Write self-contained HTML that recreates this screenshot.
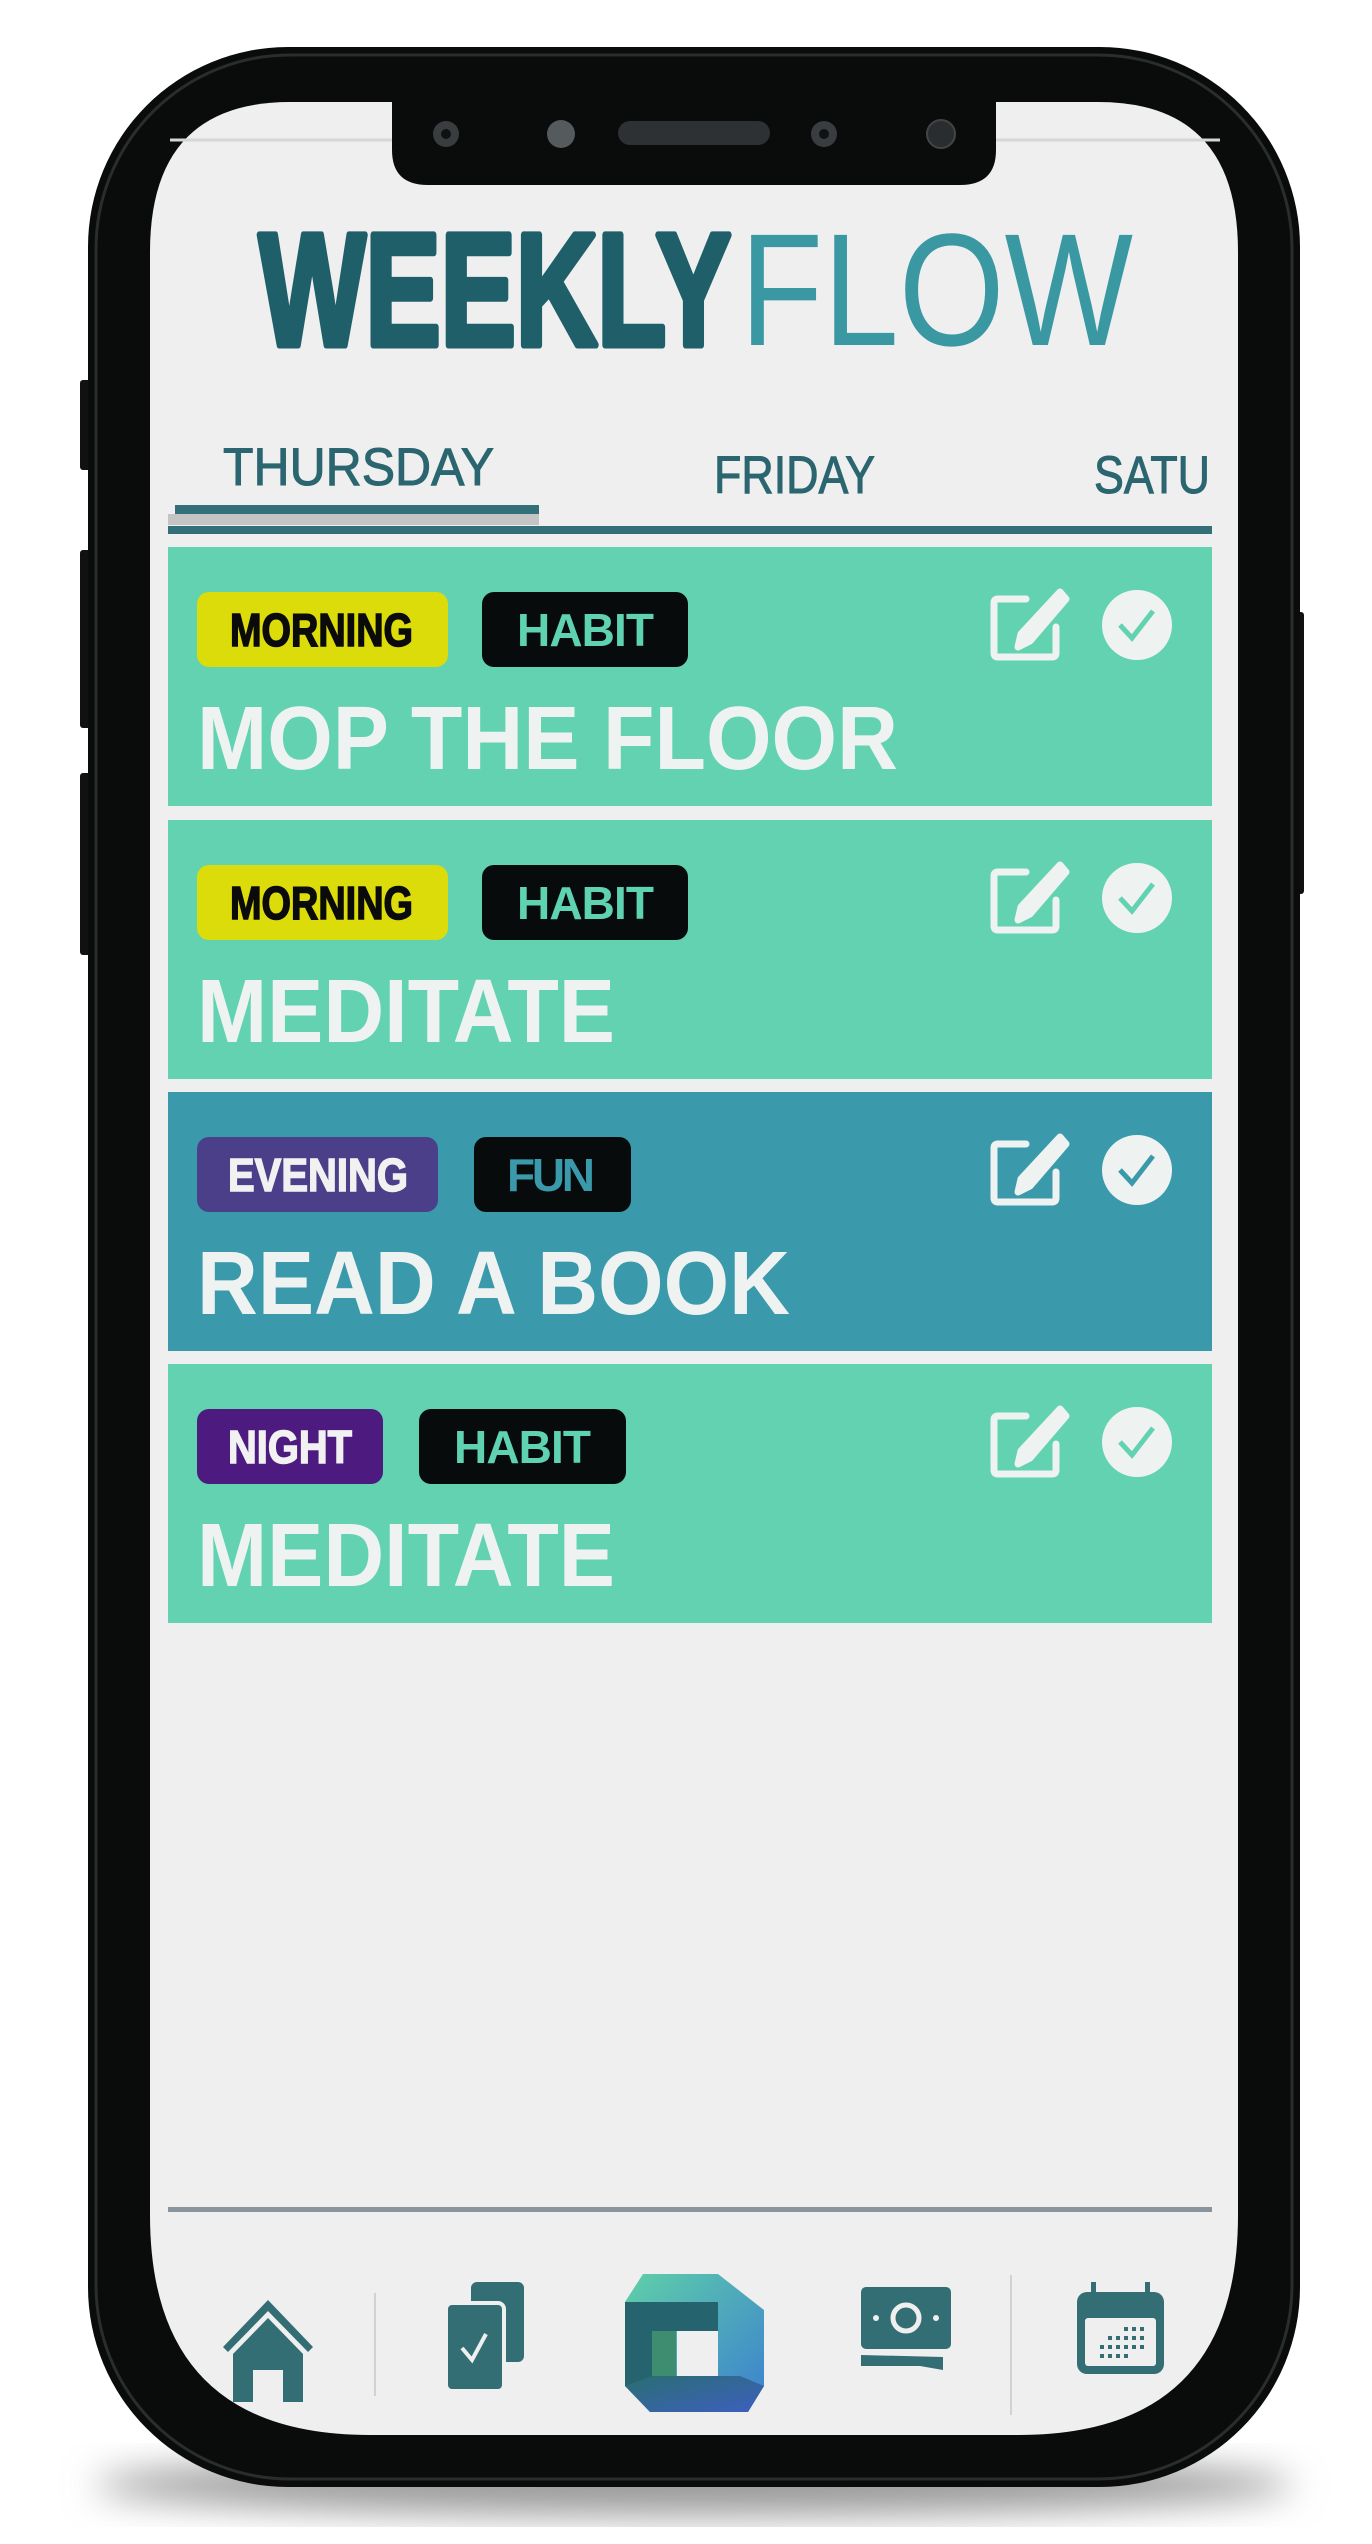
<!DOCTYPE html>
<html><head><meta charset="utf-8"><style>
html,body{margin:0;padding:0;background:#fff;width:1372px;height:2544px;overflow:hidden}
svg{display:block}
</style></head><body>
<svg width="1372" height="2544" viewBox="0 0 1372 2544" xmlns="http://www.w3.org/2000/svg" font-family="Liberation Sans, sans-serif">
<defs>
<filter id="sh" x="-20%" y="-20%" width="140%" height="140%"><feGaussianBlur stdDeviation="18"/></filter>
<linearGradient id="lg1" x1="0" y1="0" x2="1" y2="1"><stop offset="0" stop-color="#5fd0a8"/><stop offset="1" stop-color="#3b7fd0"/></linearGradient>
<linearGradient id="lg2" x1="0" y1="0" x2="1" y2="1"><stop offset="0" stop-color="#2a6e70"/><stop offset="1" stop-color="#3d5fc0"/></linearGradient>
</defs>
<ellipse cx="694" cy="2485" rx="600" ry="30" fill="#999" filter="url(#sh)"/>
<rect x="80" y="380" width="12" height="90" rx="3" fill="#111"/>
<rect x="80" y="550" width="12" height="178" rx="3" fill="#111"/>
<rect x="80" y="773" width="12" height="182" rx="3" fill="#111"/>
<rect x="1290" y="612" width="14" height="282" rx="3" fill="#111"/>
<rect x="88" y="47" width="1212" height="2440" rx="200" fill="#0a0b0b"/>
<rect x="96" y="55" width="1196" height="2424" rx="194" fill="none" stroke="#2a2d2e" stroke-width="3"/>
<path d="M290 102 H1098 Q1238 102 1238 252 V2215 Q1238 2435 1018 2435 H370 Q150 2435 150 2215 V252 Q150 102 290 102 Z" fill="#efefef"/>
<line x1="170" y1="140" x2="1220" y2="140" stroke="#d6d6d6" stroke-width="3"/>
<path d="M392 100 H996 V150 Q996 185 960 185 H428 Q392 185 392 150 Z" fill="#0a0b0b"/>
<circle cx="446" cy="134" r="13" fill="#3a3d3f"/><circle cx="446" cy="134" r="5" fill="#111"/>
<circle cx="561" cy="134" r="14" fill="#555a5c"/>
<rect x="618" y="121" width="152" height="24" rx="12" fill="#2e3133"/>
<circle cx="824" cy="134" r="13" fill="#3a3d3f"/><circle cx="824" cy="134" r="5" fill="#111"/>
<circle cx="941" cy="134" r="14" fill="#2a2d2f" stroke="#444" stroke-width="2"/>
<text x="259" y="345" font-size="160" font-weight="bold" fill="#1f5f6a" stroke="#1f5f6a" stroke-width="7" stroke-linejoin="round" textLength="472" lengthAdjust="spacingAndGlyphs">WEEKLY</text>
<text x="740" y="345" font-size="160" fill="#3a98a3" textLength="393" lengthAdjust="spacingAndGlyphs">FLOW</text>
<text x="223" y="485" font-size="53" fill="#2b6670" stroke="#2b6670" stroke-width="1" textLength="271" lengthAdjust="spacingAndGlyphs">THURSDAY</text>
<text x="714" y="493" font-size="53" fill="#2b6670" stroke="#2b6670" stroke-width="1" textLength="161" lengthAdjust="spacingAndGlyphs">FRIDAY</text>
<text x="1094" y="493" font-size="53" fill="#2b6670" stroke="#2b6670" stroke-width="1" textLength="116" lengthAdjust="spacingAndGlyphs">SATU</text>
<rect x="175" y="505" width="364" height="9" fill="#336f78"/>
<rect x="168" y="514" width="371" height="11" fill="#c4c4c4"/>
<rect x="168" y="526" width="1044" height="8" fill="#336f78"/>

<g transform="translate(0,547)">
<rect x="168" y="0" width="1044" height="259" fill="#62d2b1"/>
<rect x="197" y="45" width="251" height="75" rx="12" fill="#dcdc0a"/>
<text x="230" y="99" font-size="46" font-weight="bold" fill="#0b0b0b" stroke="#0b0b0b" stroke-width="1.5" textLength="183" lengthAdjust="spacingAndGlyphs">MORNING</text>
<rect x="482" y="45" width="206" height="75" rx="12" fill="#070b0b"/>
<text x="517" y="99" font-size="46" font-weight="bold" fill="#5fd2b1" textLength="137" lengthAdjust="spacing">HABIT</text>
<text x="197" y="222" font-size="90" font-weight="bold" fill="#eef3f1" textLength="701" lengthAdjust="spacingAndGlyphs">MOP THE FLOOR</text>
<g fill="none" stroke="#eef3f1" stroke-width="7" stroke-linejoin="round" stroke-linecap="round"><path d="M1026 52 H998 Q994 52 994 56 V106 Q994 110 998 110 H1052 Q1056 110 1056 106 V80"/><path d="M1060 45 L1066 52 L1030 94 L1018 100 L1021 87 Z" fill="#eef3f1"/></g>
<circle cx="1137" cy="78" r="35" fill="#eef3f1"/><path d="M1120 78 L1132 91 L1153 64" fill="none" stroke="#62d2b1" stroke-width="5"/>
</g>

<g transform="translate(0,820)">
<rect x="168" y="0" width="1044" height="259" fill="#62d2b1"/>
<rect x="197" y="45" width="251" height="75" rx="12" fill="#dcdc0a"/>
<text x="230" y="99" font-size="46" font-weight="bold" fill="#0b0b0b" stroke="#0b0b0b" stroke-width="1.5" textLength="183" lengthAdjust="spacingAndGlyphs">MORNING</text>
<rect x="482" y="45" width="206" height="75" rx="12" fill="#070b0b"/>
<text x="517" y="99" font-size="46" font-weight="bold" fill="#5fd2b1" textLength="137" lengthAdjust="spacing">HABIT</text>
<text x="197" y="222" font-size="90" font-weight="bold" fill="#eef3f1" textLength="418" lengthAdjust="spacingAndGlyphs">MEDITATE</text>
<g fill="none" stroke="#eef3f1" stroke-width="7" stroke-linejoin="round" stroke-linecap="round"><path d="M1026 52 H998 Q994 52 994 56 V106 Q994 110 998 110 H1052 Q1056 110 1056 106 V80"/><path d="M1060 45 L1066 52 L1030 94 L1018 100 L1021 87 Z" fill="#eef3f1"/></g>
<circle cx="1137" cy="78" r="35" fill="#eef3f1"/><path d="M1120 78 L1132 91 L1153 64" fill="none" stroke="#62d2b1" stroke-width="5"/>
</g>

<g transform="translate(0,1092)">
<rect x="168" y="0" width="1044" height="259" fill="#3a9aab"/>
<rect x="197" y="45" width="241" height="75" rx="12" fill="#4a3f88"/>
<text x="228" y="99" font-size="46" font-weight="bold" fill="#f1f1f1" stroke="#f1f1f1" stroke-width="1.5" textLength="180" lengthAdjust="spacingAndGlyphs">EVENING</text>
<rect x="474" y="45" width="157" height="75" rx="12" fill="#070b0b"/>
<text x="507" y="99" font-size="46" font-weight="bold" fill="#3a9aab" textLength="88" lengthAdjust="spacing">FUN</text>
<text x="197" y="222" font-size="90" font-weight="bold" fill="#eef3f1" textLength="593" lengthAdjust="spacingAndGlyphs">READ A BOOK</text>
<g fill="none" stroke="#eef3f1" stroke-width="7" stroke-linejoin="round" stroke-linecap="round"><path d="M1026 52 H998 Q994 52 994 56 V106 Q994 110 998 110 H1052 Q1056 110 1056 106 V80"/><path d="M1060 45 L1066 52 L1030 94 L1018 100 L1021 87 Z" fill="#eef3f1"/></g>
<circle cx="1137" cy="78" r="35" fill="#eef3f1"/><path d="M1120 78 L1132 91 L1153 64" fill="none" stroke="#3a9aab" stroke-width="5"/>
</g>

<g transform="translate(0,1364)">
<rect x="168" y="0" width="1044" height="259" fill="#62d2b1"/>
<rect x="197" y="45" width="186" height="75" rx="12" fill="#4d1a80"/>
<text x="228" y="99" font-size="46" font-weight="bold" fill="#f1f1f1" stroke="#f1f1f1" stroke-width="1.5" textLength="124" lengthAdjust="spacingAndGlyphs">NIGHT</text>
<rect x="419" y="45" width="207" height="75" rx="12" fill="#070b0b"/>
<text x="454" y="99" font-size="46" font-weight="bold" fill="#5fd2b1" textLength="137" lengthAdjust="spacing">HABIT</text>
<text x="197" y="222" font-size="90" font-weight="bold" fill="#eef3f1" textLength="418" lengthAdjust="spacingAndGlyphs">MEDITATE</text>
<g fill="none" stroke="#eef3f1" stroke-width="7" stroke-linejoin="round" stroke-linecap="round"><path d="M1026 52 H998 Q994 52 994 56 V106 Q994 110 998 110 H1052 Q1056 110 1056 106 V80"/><path d="M1060 45 L1066 52 L1030 94 L1018 100 L1021 87 Z" fill="#eef3f1"/></g>
<circle cx="1137" cy="78" r="35" fill="#eef3f1"/><path d="M1120 78 L1132 91 L1153 64" fill="none" stroke="#62d2b1" stroke-width="5"/>
</g>

<rect x="168" y="2207" width="1044" height="5" fill="#8a949c"/>
<line x1="375" y1="2293" x2="375" y2="2396" stroke="#cfd3d6" stroke-width="2"/>
<line x1="1011" y1="2275" x2="1011" y2="2415" stroke="#cfd3d6" stroke-width="2"/>
<g fill="#336e74">
<path d="M223 2347 L268 2300 L313 2347 L308 2352 L268 2311 L228 2352 Z"/>
<path d="M233 2354 L268 2318 L303 2354 V2402 H283 V2370 H253 V2402 H233 Z"/>
</g>
<g fill="#336e74">
<rect x="471" y="2282" width="53" height="80" rx="6"/>
<rect x="446" y="2303" width="58" height="88" rx="6" stroke="#efefef" stroke-width="4"/>
<path d="M462 2348 L472 2360 L486 2334" fill="none" stroke="#efefef" stroke-width="4"/>
</g>
<path d="M625 2302 L643 2274 H718 L764 2310 V2386 L748 2412 H650 L625 2386 Z" fill="url(#lg1)"/>
<path d="M625 2302 H718 V2331 H652 V2386 H625 Z" fill="#25636e"/>
<path d="M652 2331 H676 V2376 H652 Z" fill="#3e8d70"/>
<path d="M652 2376 H740 L764 2386 L748 2412 H650 L625 2386 Z" fill="url(#lg2)"/>
<rect x="677" y="2331" width="41" height="45" fill="#efefef"/>
<g fill="#336e74">
<rect x="861" y="2287" width="90" height="62" rx="5"/>
<path d="M861 2355 L943 2357 L943 2370 L920 2366 H861 Z"/>
</g>
<circle cx="906" cy="2318" r="13" fill="none" stroke="#efefef" stroke-width="5"/>
<circle cx="876" cy="2318" r="3" fill="#efefef"/><circle cx="936" cy="2318" r="3" fill="#efefef"/>
<g>
<rect x="1077" y="2292" width="87" height="82" rx="10" fill="#336e74"/>
<rect x="1085" y="2318" width="71" height="48" rx="3" fill="#efefef"/>
<rect x="1091" y="2282" width="5" height="20" fill="#336e74"/>
<rect x="1145" y="2282" width="5" height="20" fill="#336e74"/>
<g fill="#336e74">
<rect x="1124" y="2327" width="4" height="4"/><rect x="1132" y="2327" width="4" height="4"/><rect x="1140" y="2327" width="4" height="4"/>
<rect x="1108" y="2336" width="4" height="4"/><rect x="1116" y="2336" width="4" height="4"/><rect x="1124" y="2336" width="4" height="4"/><rect x="1132" y="2336" width="4" height="4"/><rect x="1140" y="2336" width="4" height="4"/>
<rect x="1100" y="2345" width="4" height="4"/><rect x="1108" y="2345" width="4" height="4"/><rect x="1116" y="2345" width="4" height="4"/><rect x="1124" y="2345" width="4" height="4"/><rect x="1132" y="2345" width="4" height="4"/><rect x="1140" y="2345" width="4" height="4"/>
<rect x="1100" y="2354" width="4" height="4"/><rect x="1108" y="2354" width="4" height="4"/><rect x="1116" y="2354" width="4" height="4"/><rect x="1124" y="2354" width="4" height="4"/>
</g>
</g>
</svg>
</body></html>
